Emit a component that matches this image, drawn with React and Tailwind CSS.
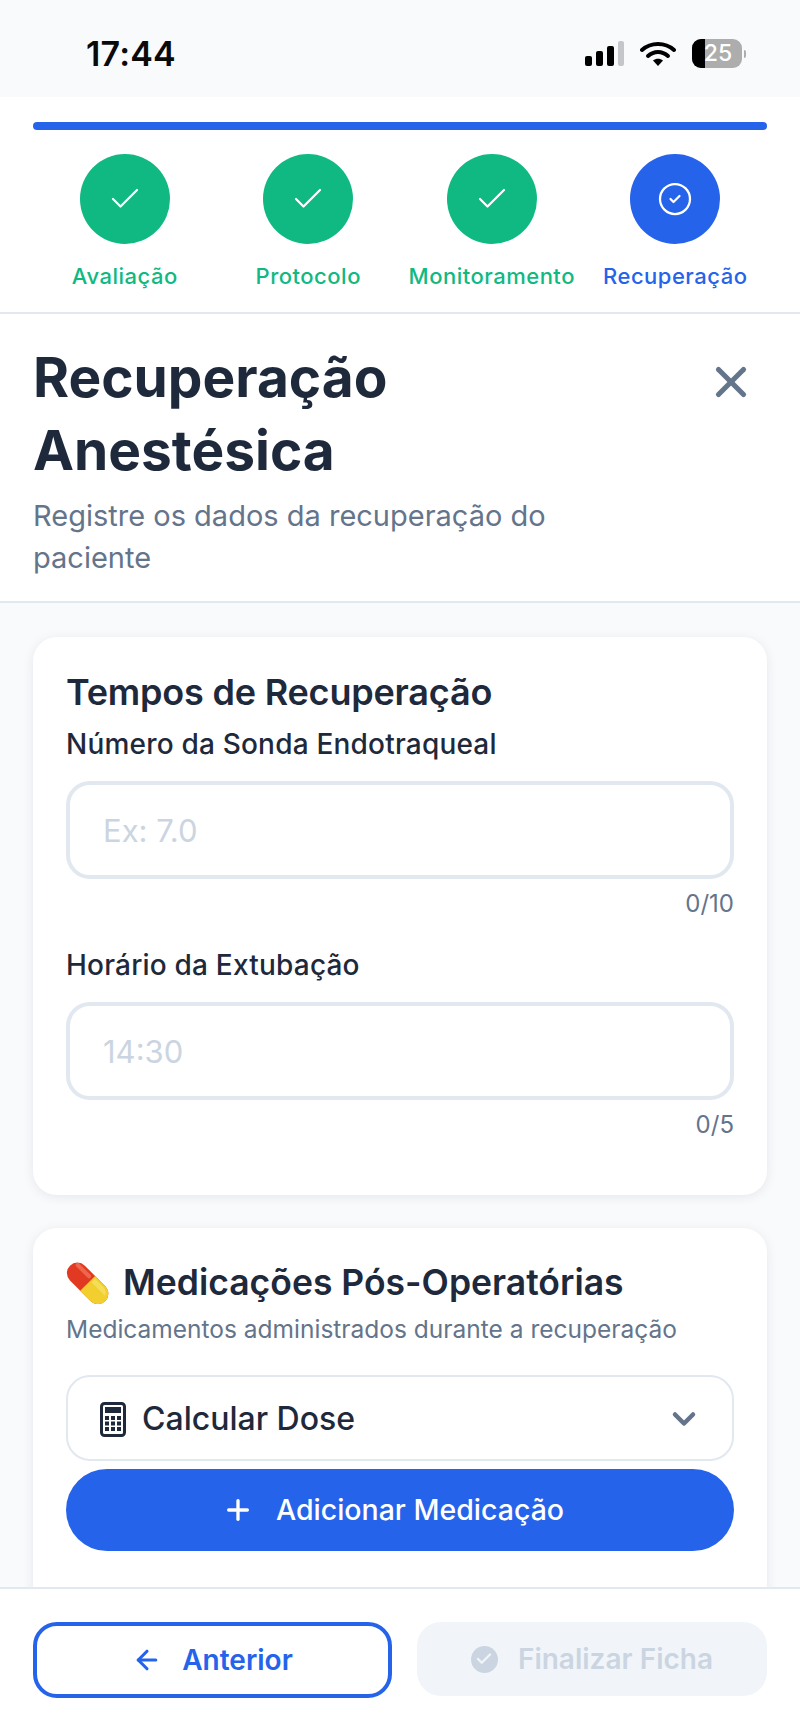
// App.jsx
import React from "react";
import { Check, CircleCheck, X, ChevronDown, Plus, ArrowLeft } from "lucide-react";

const steps = [
  { label: "Avaliação", done: true },
  { label: "Protocolo", done: true },
  { label: "Monitoramento", done: true },
  { label: "Recuperação", done: false },
];

const StatusIcons = () => (
  <div className="flex items-center gap-[16px]">
    <svg width="39" height="26" viewBox="0 0 39 26">
      <rect x="0" y="15" width="7" height="10" rx="2" fill="#000" />
      <rect x="11" y="10" width="7" height="15" rx="2" fill="#000" />
      <rect x="22" y="5" width="7" height="20" rx="2" fill="#000" />
      <rect x="33" y="0" width="6" height="25" rx="2" fill="#c4c6c9" />
    </svg>
    <svg width="36" height="26" viewBox="0 0 36 26">
      <path d="M2 9 C11 1 25 1 34 9" fill="none" stroke="#000" strokeWidth="4" strokeLinecap="round" />
      <path d="M8 15 C14 9.5 22 9.5 28 15" fill="none" stroke="#000" strokeWidth="4" strokeLinecap="round" />
      <path d="M13 19.5 C16 17 20 17 23 19.5 L18 25 Z" fill="#000" />
    </svg>
    <div className="relative flex items-center">
      <div className="relative h-[29px] w-[50px] overflow-hidden rounded-[9px] bg-[#adadad]">
        <div className="h-full w-[13px] bg-black" />
        <span className="absolute inset-0 flex items-center justify-center pl-[2px] text-[23px] font-medium leading-none text-white">
          25
        </span>
      </div>
      <div className="ml-[2px] h-[8px] w-[2px] rounded-r bg-[#adadad]" />
    </div>
  </div>
);

const Step = ({ label, done }) => (
  <div className="flex w-[183.5px] flex-col items-center">
    <div
      className={`flex h-[90px] w-[90px] items-center justify-center rounded-full text-white ${
        done ? "bg-[#10b981]" : "bg-[#2563eb]"
      }`}
    >
      {done ? <Check size={36} strokeWidth={1.5} /> : <CircleCheck size={36} strokeWidth={1.5} />}
    </div>
    <span
      className={`mt-[18px] whitespace-nowrap text-[22px] font-medium leading-[28px] tracking-[0.5px] ${
        done ? "text-[#10b981]" : "text-[#2563eb]"
      }`}
    >
      {label}
    </span>
  </div>
);

const Field = ({ label, placeholder, counter }) => (
  <div className="mb-[29px]">
    <label className="block text-[28px] font-medium leading-[36px] tracking-[0.2px] text-[#1e293b]">{label}</label>
    <input
      readOnly
      placeholder={placeholder}
      className="mt-[19px] block h-[98px] w-full rounded-[24px] border-4 border-[#e2e8f0] bg-white px-[33px] text-[31px] outline-none placeholder:text-[#cbd5e1]"
    />
    <div className="mt-[11px] text-right text-[24px] leading-[28px] text-[#64748b]">{counter}</div>
  </div>
);

const PillIcon = () => (
  <svg width="44" height="42" viewBox="0 0 44 42">
    <g transform="rotate(45 22 21)">
      <rect x="-3" y="11" width="50" height="21" rx="10.5" fill="#e23a22" />
      <path d="M22 11 H36.5 A10.5 10.5 0 0 1 36.5 32 H22 Z" fill="#f2cf2e" />
      <path d="M24 13 H36 A8 8 0 0 1 43 18 H24 Z" fill="#f8e36a" opacity="0.7" />
      <rect x="0" y="13.5" width="20" height="4" rx="2" fill="#f27a60" opacity="0.7" />
    </g>
  </svg>
);

const CalculatorIcon = () => (
  <svg width="26" height="35" viewBox="0 0 26 35">
    <rect x="1.5" y="1.5" width="23" height="32" rx="3" fill="#fff" stroke="#1e293b" strokeWidth="3" />
    <rect x="5" y="5" width="16" height="6" fill="#1e293b" />
    {[14, 19.5, 25].map((y) =>
      [5, 11, 17].map((x) => <rect key={`${x}-${y}`} x={x} y={y} width="4" height="4" fill="#1e293b" />)
    )}
  </svg>
);

export default function App() {
  return (
    <div
      className="flex h-[1731px] w-[800px] flex-col overflow-hidden bg-[#f8fafc]"
      style={{ fontFamily: "Inter, 'Liberation Sans', sans-serif" }}
    >
      {/* status bar */}
      <div className="flex h-[97px] shrink-0 items-center justify-between bg-[#f8fafc] pl-[86px] pr-[54px] pt-[10px]">
        <span className="text-[34px] font-semibold leading-none tracking-[0.2px] text-[#0a0a0a]">17:44</span>
        <StatusIcons />
      </div>

      {/* stepper */}
      <div className="shrink-0 border-b-2 border-[#e2e8f0] bg-white px-[33px] pt-[25px]">
        <div className="h-[8px] rounded-full bg-[#2563eb]" />
        <div className="mt-[24px] flex justify-center pb-[22px]">
          {steps.map((s) => (
            <Step key={s.label} {...s} />
          ))}
        </div>
      </div>

      {/* header */}
      <div className="flex shrink-0 items-start justify-between border-b-2 border-[#e2e8f0] bg-white pb-[22px] pl-[33px] pr-[44px] pt-[27px]">
        <div className="w-[560px]">
          <h1 className="text-[55px] font-bold leading-[73px] text-[#1e293b]">Recuperação Anestésica</h1>
          <p className="mt-[8px] text-[29px] leading-[42px] text-[#64748b]">
            Registre os dados da recuperação do paciente
          </p>
        </div>
        <button className="mt-[16px] text-[#64748b]">
          <X size={50} strokeWidth={2.5} />
        </button>
      </div>

      {/* content */}
      <div className="min-h-0 flex-1 overflow-hidden px-[33px] pt-[34px]">
        <div className="rounded-[24px] bg-white px-[33px] pb-[27px] pt-[33px] shadow-[0_2px_12px_rgba(15,23,42,0.08)]">
          <h2 className="text-[36px] font-semibold leading-[44px] tracking-[-0.2px] text-[#1e293b]">Tempos de Recuperação</h2>
          <div className="mt-[12px]">
            <Field label="Número da Sonda Endotraqueal" placeholder="Ex: 7.0" counter="0/10" />
            <Field label="Horário da Extubação" placeholder="14:30" counter="0/5" />
          </div>
        </div>

        <div className="mt-[33px] rounded-[24px] bg-white px-[33px] pb-[90px] pt-[33px] shadow-[0_2px_12px_rgba(15,23,42,0.08)]">
          <div className="flex items-center gap-[13px]">
            <PillIcon />
            <h2 className="text-[35.5px] font-semibold leading-[44px] text-[#1e293b]">Medicações Pós-Operatórias</h2>
          </div>
          <p className="mt-[8px] text-[24.5px] leading-[32px] text-[#64748b]">
            Medicamentos administrados durante a recuperação
          </p>
          <div className="mt-[30px] flex h-[86px] items-center justify-between rounded-[24px] border-2 border-[#e2e8f0] bg-white pl-[32px] pr-[30px] pt-[2px]">
            <div className="flex items-center gap-[16px]">
              <CalculatorIcon />
              <span className="text-[32px] font-medium text-[#1e293b]">Calcular Dose</span>
            </div>
            <ChevronDown size={36} strokeWidth={3} className="text-[#64748b]" />
          </div>
          <button className="mt-[8px] flex h-[82px] w-full items-center justify-center gap-[22px] rounded-full bg-[#2563eb] pr-[14px] text-[28.5px] font-medium text-white">
            <Plus size={32} strokeWidth={2.5} />
            Adicionar Medicação
          </button>
        </div>
      </div>

      {/* footer */}
      <div className="relative flex h-[144px] shrink-0 gap-[25px] border-t-2 border-[#e2e8f0] bg-white px-[33px] pt-[33px]">
        <button className="flex h-[76px] w-[359px] items-center justify-center gap-[20px] rounded-[24px] border-4 border-[#2563eb] bg-white text-[28px] font-semibold text-[#2563eb]">
          <ArrowLeft size={30} strokeWidth={2.5} />
          Anterior
        </button>
        <button className="flex h-[74px] flex-1 items-center justify-center gap-[20px] rounded-[24px] bg-[#f1f5f9] text-[28px] font-semibold text-[#cbd5e1]">
          <span className="flex h-[27px] w-[27px] items-center justify-center rounded-full bg-[#cbd5e1] text-[#f1f5f9]">
            <Check size={18} strokeWidth={3} />
          </span>
          Finalizar Ficha
        </button>
      </div>
    </div>
  );
}
